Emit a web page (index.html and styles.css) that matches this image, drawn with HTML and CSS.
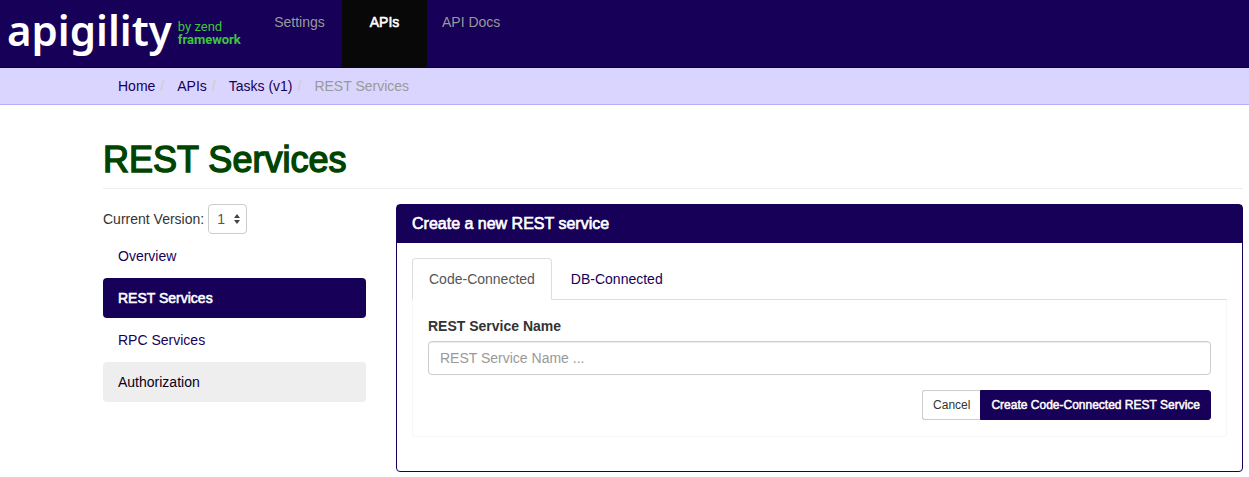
FILE: index.html
```html
<!DOCTYPE html>
<html lang="en">
<head>
<meta charset="utf-8">
<title>REST Services - Apigility</title>
<link rel="stylesheet" href="styles.css">
</head>
<body>
<header class="navbar">
  <a class="brand" href="#">
    <span class="brand-name">apigility</span>
    <span class="brand-tag"><span>by zend</span><b>framework</b></span>
  </a>
  <nav class="nav">
    <a class="nav-link" href="#">Settings</a>
    <a class="nav-link active" href="#">APIs</a>
    <a class="nav-link" href="#">API Docs</a>
  </nav>
</header>
<nav class="breadcrumb-bar" aria-label="Breadcrumb">
  <ol class="breadcrumb">
    <li><a href="#">Home</a></li>
    <li><a href="#">APIs</a></li>
    <li><a href="#">Tasks (v1)</a></li>
    <li class="current">REST Services</li>
  </ol>
</nav>
<main class="container">
  <h1 class="page-title">REST Services</h1>
  <div class="columns">
    <aside class="sidebar">
      <div class="version">
        <label for="version">Current Version:</label>
        <span class="select-wrap">
          <select id="version" class="version-select"><option>1</option></select>
          <svg class="select-arrows" viewBox="0 0 6 12" aria-hidden="true"><path d="M0 5L3 1L6 5ZM0 7L3 11L6 7Z"/></svg>
        </span>
      </div>
      <nav class="pills">
        <a class="pill" href="#">Overview</a>
        <a class="pill active" href="#">REST Services</a>
        <a class="pill" href="#">RPC Services</a>
        <a class="pill hovered" href="#">Authorization</a>
      </nav>
    </aside>
    <section class="panel">
      <h2 class="panel-heading">Create a new REST service</h2>
      <div class="panel-body">
        <div class="tabs" role="tablist">
          <button class="tab active" type="button" role="tab" aria-selected="true">Code-Connected</button>
          <button class="tab" type="button" role="tab" aria-selected="false">DB-Connected</button>
        </div>
        <form class="tab-content">
          <label class="field-label" for="service-name">REST Service Name</label>
          <input class="field" id="service-name" type="text" placeholder="REST Service Name ...">
          <div class="actions">
            <button class="btn btn-default" type="button">Cancel</button>
            <button class="btn btn-primary" type="submit">Create Code-Connected REST Service</button>
          </div>
        </form>
      </div>
    </section>
  </div>
</main>
</body>
</html>
```

FILE: styles.css
```css
* { box-sizing: border-box; }

body {
  margin: 0;
  background: #fff;
  color: #333;
  font: 14px/20px "Liberation Sans", Arial, sans-serif;
}

a { color: #170058; text-decoration: none; }
button, input, select { font: inherit; }

.navbar {
  display: flex;
  height: 68px;
  background: #170058;
  border-bottom: 1px solid #080808;
}

.brand {
  display: flex;
  gap: 6px;
  width: 257px;
  padding-left: 7px;
  color: #fff;
}

.brand-name {
  font: 600 42px/60px "Noto Sans", sans-serif;
}

.brand-tag {
  display: flex;
  flex-direction: column;
  padding-top: 20px;
  color: #3fc43f;
  font: 13px/13px Roboto, sans-serif;
}

.nav { display: flex; }

.nav-link {
  min-width: 85px;
  padding: 12px 15px;
  color: #999;
  text-align: center;
}

.nav-link.active {
  background: #080808;
  color: #fff;
}

.nav-link.active,
.pill.active,
.page-title,
.panel-heading,
.btn-primary {
  font-weight: 400;
  -webkit-text-stroke: 0.04em currentColor;
}

.breadcrumb-bar {
  background: #dad5ff;
  border-bottom: 1px solid #b9adff;
}

.breadcrumb {
  display: flex;
  margin: 0;
  padding: 8px 15px 8px 118px;
  list-style: none;
}

.breadcrumb li + li::before {
  content: "/";
  padding: 0 13px 0 5px;
  color: #ccc;
}

.breadcrumb .current { color: #999; }

.container {
  max-width: 1243px;
  margin-right: 6px;
  padding-left: 103px;
}

.page-title {
  margin: 35px 0 15px;
  padding-bottom: 8px;
  border-bottom: 1px solid #eee;
  color: #004400;
  font-size: 36px;
  line-height: 40px;
}

.columns {
  display: grid;
  grid-template-columns: 263px 1fr;
  gap: 30px;
  align-items: start;
}

.version {
  display: flex;
  align-items: center;
  gap: 4px;
  height: 30px;
  margin-bottom: 2px;
}

.select-wrap { position: relative; }

.version-select {
  display: block;
  width: 39px;
  height: 30px;
  padding: 0 8px;
  appearance: none;
  background: #fff;
  border: 1px solid #ccc;
  border-radius: 4px;
  color: #555;
}

.select-arrows {
  position: absolute;
  top: 9px;
  right: 7px;
  width: 6px;
  height: 12px;
  fill: #444;
  pointer-events: none;
}

.pills { display: grid; gap: 2px; }

.pill {
  padding: 10px 15px;
  border-radius: 4px;
}

.pill.active { background: #170058; color: #fff; }
.pill.hovered { background: #eee; color: #080018; }

.panel {
  border: 1px solid #170058;
  border-radius: 4px;
}

.panel-heading {
  margin: 0;
  padding: 9px 15px;
  background: #170058;
  color: #fff;
  font-size: 16px;
  line-height: 20px;
}

.panel-body { padding: 15px 15px 34px; }

.tabs {
  display: flex;
  gap: 2px;
  border-bottom: 1px solid #ddd;
}

.tab {
  margin-bottom: -1px;
  padding: 10px 16px;
  background: none;
  border: 1px solid transparent;
  border-radius: 4px 4px 0 0;
  color: #170058;
}

.tab.active {
  background: #fff;
  border-color: #ddd #ddd #fff;
  color: #555;
}

.tab-content {
  padding: 16px 15px;
  border: 1px solid #f7f7f7;
  border-top: 0;
  border-radius: 0 0 4px 4px;
}

.field-label {
  display: block;
  margin-bottom: 5px;
  font-weight: 700;
}

.field {
  display: block;
  width: 100%;
  height: 34px;
  padding: 6px 11px;
  background: #fff;
  border: 1px solid #ccc;
  border-radius: 4px;
  box-shadow: inset 0 1px 1px #eee;
  color: #555;
}

.field::placeholder { color: #999; opacity: 1; }

.actions {
  display: flex;
  justify-content: flex-end;
  margin-top: 15px;
}

.btn {
  padding: 5px 10px;
  border: 1px solid #ccc;
  font-size: 12px;
  line-height: 18px;
}

.btn-default {
  background: #fff;
  border-right: 0;
  border-radius: 3px 0 0 3px;
  color: #333;
}

.btn-primary {
  background: #170058;
  border-color: #170058;
  border-radius: 0 3px 3px 0;
  color: #fff;
}
```
